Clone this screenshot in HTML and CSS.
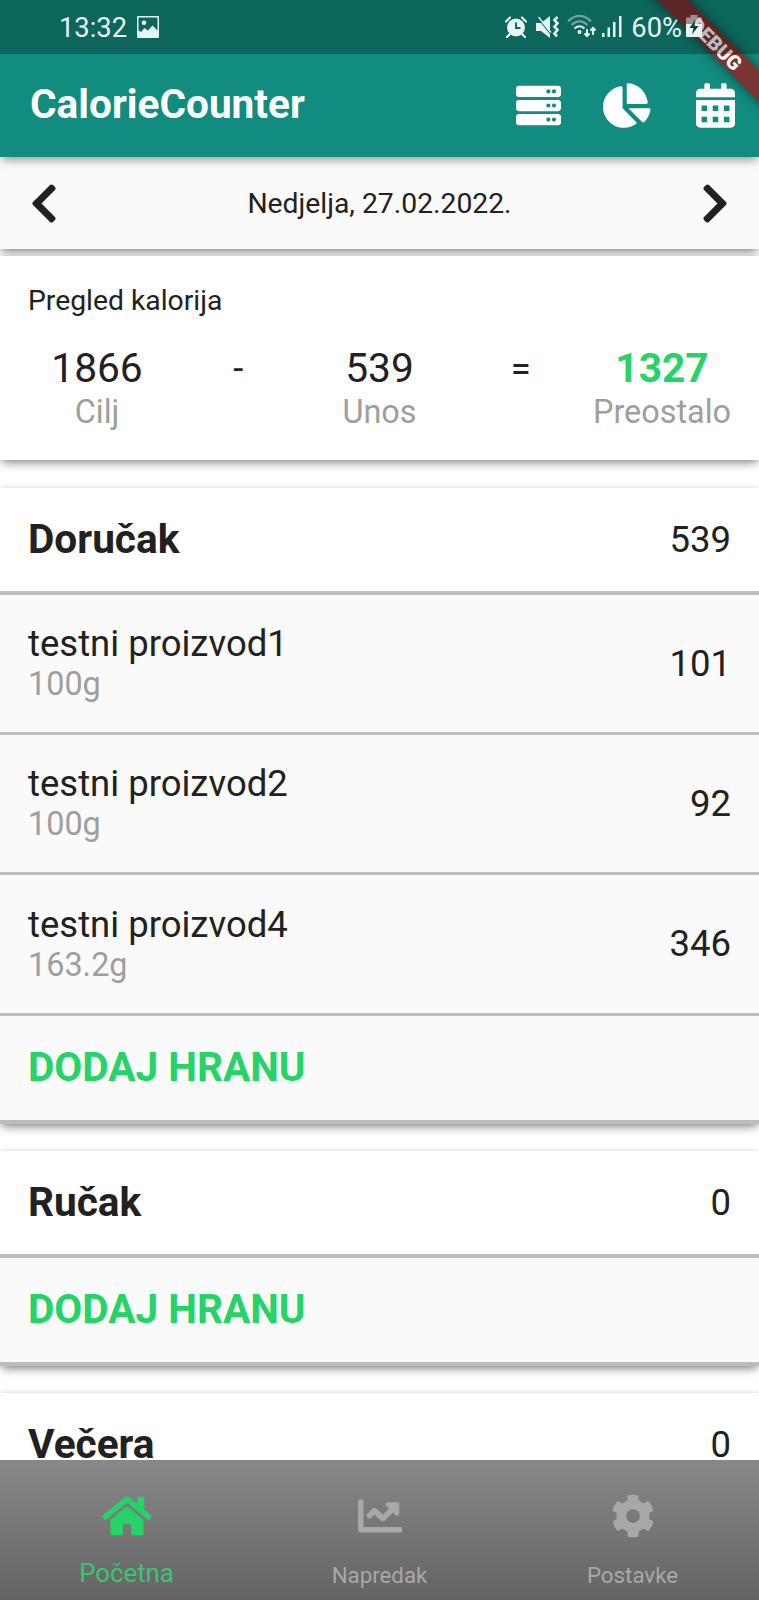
FILE: index.html
```html
<!DOCTYPE html>
<html lang="hr">
<head>
<meta charset="utf-8">
<title>CalorieCounter</title>
<link rel="stylesheet" href="styles.css">
</head>
<body>
<div class="screen">
  <header class="top">
    <div class="status">
      <span class="clock">13:32</span>
      <svg class="st-img" viewBox="0 0 22 22"><path fill="currentColor" fill-rule="evenodd" d="M1 0h20a1 1 0 0 1 1 1v20a1 1 0 0 1-1 1H1a1 1 0 0 1-1-1V1a1 1 0 0 1 1-1zM1.500 1.500v13l2.500 1.500 3.500-4 3.500 2.500 4.500-5 5 5V1.500zM7 4.500a2.300 2.300 0 1 1 0 4.600 2.300 2.300 0 0 1 0-4.600z"/></svg>
      <span class="grow"></span>
      <svg class="st-alarm" viewBox="0 0 22 22"><circle cx="11" cy="11.500" r="9" fill="currentColor"/><path d="M1 5.500 5 1.500M21 5.500 17 1.500M5 18l-3 3M17 18l3 3" stroke="currentColor" stroke-width="2.200" stroke-linecap="round"/><path d="M11 6.500V12h4.500" fill="none" stroke="#0e675b" stroke-width="1.900"/></svg>
      <svg class="st-mute" viewBox="0 0 23 22"><path fill="currentColor" d="M0 7h5l9-7v22l-9-7H0z"/><path d="M1 1l15 19" stroke="#0e675b" stroke-width="1.200"/><path d="M2.500 1 15 16.500" stroke="currentColor" stroke-width="1.300"/><path d="M21.500 1l-3 3 3 3.300-3 3.400 3 3.300-3 3.400 2.500 3" fill="none" stroke="currentColor" stroke-width="2.600"/></svg>
      <svg class="st-wifi" viewBox="0 0 29 23"><g fill="none" stroke="currentColor" stroke-width="2.200"><path d="M1 6.500C8-1 17-1 24 6.500M4.500 10c5-5 11-5 16 0" opacity=".45"/><path d="M7.500 13.500c3-3 7-3 10 0"/></g><circle cx="12.500" cy="17" r="2" fill="currentColor"/><path d="M20 14v7m-2.600-2.600L20 21l2.600-2.600M26 20v-7m-2.600 2.600L26 13l2.600 2.600" fill="none" stroke="currentColor" stroke-width="2"/></svg>
      <svg class="st-signal" viewBox="0 0 20 21"><path fill="currentColor" d="M0 17h2.500v4H0zM5.500 11.500H8V21H5.500zM11 6h2.500v15H11zM17 0h2.500v21H17z"/></svg>
      <span class="pct">60%</span>
      <svg class="st-batt" viewBox="0 0 16 23"><path fill="currentColor" opacity=".5" d="M4.500 0h7v2.500H16V10H0V2.500h4.500z"/><path fill="currentColor" d="M0 9h16v13H0z"/><path fill="#123c38" d="M9.500 4.500 3.500 13h4L6 19.500l6.500-8.500h-4z"/></svg>
    </div>
    <div class="appbar">
      <h1 class="brand">CalorieCounter</h1>
      <svg class="ico-server" viewBox="0 0 512 512"><path fill="currentColor" fill-rule="evenodd" d="M480 160H32c-17.700 0-32-14.300-32-32V64c0-17.700 14.300-32 32-32h448c17.700 0 32 14.300 32 32v64c0 17.700-14.300 32-32 32zm-48-88a24 24 0 1 0 0 48 24 24 0 0 0 0-48zm-64 0a24 24 0 1 0 0 48 24 24 0 0 0 0-48zM480 320H32c-17.700 0-32-14.300-32-32v-64c0-17.700 14.300-32 32-32h448c17.700 0 32 14.300 32 32v64c0 17.700-14.300 32-32 32zm-48-88a24 24 0 1 0 0 48 24 24 0 0 0 0-48zm-64 0a24 24 0 1 0 0 48 24 24 0 0 0 0-48zM480 480H32c-17.700 0-32-14.300-32-32v-64c0-17.700 14.300-32 32-32h448c17.700 0 32 14.300 32 32v64c0 17.700-14.300 32-32 32zm-48-88a24 24 0 1 0 0 48 24 24 0 0 0 0-48zm-64 0a24 24 0 1 0 0 48 24 24 0 0 0 0-48z"/></svg>
      <svg class="ico-pie" viewBox="0 0 544 512"><path fill="currentColor" d="M527.790 288H290.500l158.030 158.030c6.040 6.040 15.980 6.530 22.190.68 38.700-36.460 65.320-85.610 73.130-140.860 1.340-9.460-6.510-17.850-16.060-17.850zm-15.830-64.800C503.720 103.740 408.260 8.280 288.800.04 279.680-.59 272 7.100 272 16.240V240h223.770c9.140 0 16.820-7.680 16.190-16.800zM224 288V50.710c0-9.550-8.390-17.400-17.840-16.060C86.990 51.490-4.100 155.600.14 280.370 4.500 408.510 114.830 513.590 243.030 511.980c50.400-.63 96.970-16.870 135.260-44.030 7.900-5.600 8.420-17.230 1.570-24.080L224 288z"/></svg>
      <svg class="ico-cal" viewBox="0 0 448 512"><path fill="currentColor" fill-rule="evenodd" d="M0 464c0 26.500 21.500 48 48 48h352c26.500 0 48-21.500 48-48V192H0zM64 256h64v64H64zM192 256h64v64h-64zM320 256h64v64h-64zM64 384h64v64H64zM192 384h64v64h-64zM320 384h64v64h-64zM400 64h-48V16c0-8.800-7.200-16-16-16h-32c-8.800 0-16 7.200-16 16v48H160V16c0-8.800-7.200-16-16-16h-32c-8.800 0-16 7.200-16 16v48H48C21.500 64 0 85.500 0 112v48h448v-48c0-26.500-21.500-48-48-48z"/></svg>
    </div>
    <div class="ribbon">DEBUG</div>
  </header>

  <main class="content">
    <div class="datebar">
      <svg class="chev" viewBox="0 0 320 512"><path fill="currentColor" d="M34.520 239.030L228.870 44.690c9.370-9.370 24.570-9.370 33.940 0l22.670 22.670c9.360 9.360 9.370 24.520.04 33.900L131.490 256l154.020 154.750c9.340 9.380 9.320 24.540-.04 33.900l-22.670 22.670c-9.370 9.370-24.570 9.370-33.940 0L34.520 272.970c-9.370-9.370-9.370-24.570 0-33.940z"/></svg>
      <span class="date">Nedjelja, 27.02.2022.</span>
      <svg class="chev flip" viewBox="0 0 320 512"><path fill="currentColor" d="M34.520 239.030L228.870 44.690c9.370-9.370 24.570-9.370 33.940 0l22.670 22.670c9.360 9.360 9.370 24.520.04 33.900L131.490 256l154.020 154.750c9.340 9.380 9.320 24.540-.04 33.900l-22.670 22.670c-9.370 9.370-24.570 9.370-33.940 0L34.520 272.970c-9.370-9.370-9.370-24.570 0-33.940z"/></svg>
    </div>

    <section class="summary">
      <h2 class="summary-title">Pregled kalorija</h2>
      <div class="equation">
        <div class="term"><span class="value">1866</span><span class="label">Cilj</span></div>
        <span class="op">-</span>
        <div class="term"><span class="value">539</span><span class="label">Unos</span></div>
        <span class="op">=</span>
        <div class="term"><span class="value left">1327</span><span class="label">Preostalo</span></div>
      </div>
    </section>

    <section class="meal">
      <div class="meal-head"><h3 class="meal-name">Doručak</h3><span class="kcal">539</span></div>
      <div class="food"><div class="food-text"><span class="food-name">testni proizvod1</span><span class="food-qty">100g</span></div><span class="kcal">101</span></div>
      <div class="food"><div class="food-text"><span class="food-name">testni proizvod2</span><span class="food-qty">100g</span></div><span class="kcal">92</span></div>
      <div class="food last"><div class="food-text"><span class="food-name">testni proizvod4</span><span class="food-qty">163.2g</span></div><span class="kcal">346</span></div>
      <div class="add">DODAJ HRANU</div>
    </section>

    <section class="meal">
      <div class="meal-head"><h3 class="meal-name">Ručak</h3><span class="kcal">0</span></div>
      <div class="add">DODAJ HRANU</div>
    </section>

    <section class="meal">
      <div class="meal-head"><h3 class="meal-name">Večera</h3><span class="kcal">0</span></div>
    </section>
  </main>

  <nav class="tabs">
    <div class="tab active">
      <svg class="tab-home" viewBox="0 0 576 512"><path fill="currentColor" d="M280.370 148.260L96 300.110V464a16 16 0 0 0 16 16l112.060-.29a16 16 0 0 0 15.920-16V368a16 16 0 0 1 16-16h64a16 16 0 0 1 16 16v95.640a16 16 0 0 0 16 16.050L464 480a16 16 0 0 0 16-16V300L295.670 148.260a12.190 12.190 0 0 0-15.300 0zM571.600 251.470L488 182.560V44.050a12 12 0 0 0-12-12h-56a12 12 0 0 0-12 12v72.610L318.470 43a48 48 0 0 0-61 0L4.340 251.470a12 12 0 0 0-1.600 16.900l25.500 31A12 12 0 0 0 45.150 301l235.220-193.740a12.190 12.190 0 0 1 15.300 0L530.900 301a12 12 0 0 0 16.900-1.600l25.500-31a12 12 0 0 0-1.700-16.930z"/></svg>
      <span class="tab-label">Početna</span>
    </div>
    <div class="tab">
      <svg class="tab-ico" viewBox="0 0 512 512"><path fill="currentColor" d="M496 384H64V80c0-8.840-7.160-16-16-16H16C7.160 64 0 71.160 0 80v336c0 17.670 14.330 32 32 32h464c8.840 0 16-7.160 16-16v-32c0-8.840-7.160-16-16-16zM464 96H345.940c-21.380 0-32.090 25.850-16.970 40.970l32.400 32.400L288 242.750l-73.370-73.370c-12.500-12.500-32.760-12.500-45.250 0l-68.690 68.690c-6.250 6.250-6.250 16.380 0 22.630l22.620 22.620c6.250 6.250 16.380 6.250 22.630 0L192 237.250l73.370 73.370c12.500 12.500 32.760 12.500 45.250 0l96-96 32.400 32.400c15.120 15.120 40.970 4.410 40.970-16.970V112c.01-8.840-7.150-16-15.990-16z"/></svg>
      <span class="tab-label">Napredak</span>
    </div>
    <div class="tab">
      <svg class="tab-ico" viewBox="0 0 512 512"><path fill="currentColor" d="M487.400 315.700l-42.600-24.600c4.300-23.200 4.300-47 0-70.200l42.600-24.600c4.900-2.800 7.100-8.600 5.500-14-11.100-35.600-30-67.800-54.700-94.600-3.800-4.100-10-5.100-14.800-2.300L380.800 110c-17.900-15.400-38.500-27.300-60.800-35.100V25.800c0-5.600-3.900-10.500-9.400-11.700-36.700-8.200-74.300-7.800-109.200 0-5.500 1.200-9.400 6.100-9.400 11.700V75c-22.200 7.900-42.800 19.800-60.800 35.100L88.700 85.500c-4.900-2.800-11-1.900-14.800 2.300-24.700 26.700-43.600 58.900-54.700 94.600-1.700 5.400.6 11.200 5.500 14L67.300 221c-4.300 23.200-4.300 47 0 70.200l-42.600 24.600c-4.900 2.800-7.100 8.600-5.500 14 11.100 35.600 30 67.800 54.700 94.600 3.800 4.100 10 5.100 14.800 2.300l42.600-24.600c17.900 15.400 38.500 27.300 60.800 35.100v49.200c0 5.600 3.900 10.500 9.400 11.700 36.700 8.200 74.300 7.800 109.200 0 5.500-1.200 9.400-6.100 9.400-11.700v-49.200c22.200-7.900 42.800-19.800 60.800-35.100l42.600 24.600c4.900 2.800 11 1.900 14.800-2.300 24.700-26.700 43.600-58.900 54.700-94.600 1.500-5.500-.7-11.300-5.600-14.100zM256 336c-44.100 0-80-35.900-80-80s35.900-80 80-80 80 35.900 80 80-35.900 80-80 80z"/></svg>
      <span class="tab-label">Postavke</span>
    </div>
  </nav>
</div>
</body>
</html>
```
FILE: styles.css
```css
* { box-sizing: border-box; }
body {
  margin: 0;
  font-family: Roboto, "Liberation Sans", sans-serif;
  color: #212121;
}
h1, h2, h3 { margin: 0; font-weight: inherit; font-size: inherit; }
svg { display: block; flex: none; }

.screen {
  width: 759px;
  height: 1600px;
  display: flex;
  flex-direction: column;
  overflow: hidden;
  background: #fff;
}

/* status bar and app bar */
.top {
  position: relative;
  z-index: 2;
  flex: none;
  overflow: hidden;
  background: #128c7e;
  box-shadow: 0 5px 9px -2px rgba(0, 0, 0, 0.4);
  color: #fff;
}
.status {
  position: relative;
  z-index: 1;
  height: 54px;
  padding: 0 57px 1px 59px;
  display: flex;
  align-items: center;
  background: rgba(0, 0, 0, 0.265);
  color: #e6f5f2;
  font-size: 27.300px;
}
.clock, .pct { padding-top: 2px; }
.grow { flex: 1; }
.st-img { width: 22px; height: 22px; margin-left: 10px; }
.st-alarm { width: 22px; height: 22px; }
.st-mute { width: 23px; height: 22px; margin-left: 9px; }
.st-wifi { width: 29px; height: 23px; margin-left: 8px; }
.st-signal { width: 20px; height: 21px; margin-left: 6px; }
.pct { margin-left: 9px; }
.st-batt { width: 16px; height: 23px; margin-left: 4px; }
.appbar {
  height: 103px;
  padding: 0 24px 0 30px;
  display: flex;
  align-items: center;
}
.brand {
  flex: 1;
  padding-bottom: 3px;
  font-size: 40.600px;
  font-weight: 700;
}
.ico-server { width: 45px; height: 45px; margin-right: 42px; }
.ico-pie { width: 47.500px; height: 45px; margin-right: 45.500px; }
.ico-cal { width: 39px; height: 45px; }

.ribbon {
  position: absolute;
  left: 602px;
  top: 33px;
  width: 230px;
  height: 22px;
  line-height: 25px;
  padding-right: 1px;
  text-align: center;
  transform: rotate(45deg);
  background: rgba(165, 18, 22, 0.72);
  box-shadow: 0 0 12px rgba(0, 0, 0, 0.5);
  font-size: 20px;
  font-weight: 900;
}

/* scrolling content */
.content {
  flex: 1;
  min-height: 0;
  overflow: hidden;
}
.datebar {
  height: 92px;
  padding: 0 30px;
  display: flex;
  align-items: center;
  justify-content: space-between;
  background: #fafafa;
  box-shadow: 0 5px 9px -2px rgba(0, 0, 0, 0.4), 0 0 6px rgba(0, 0, 0, 0.2);
  font-size: 28.300px;
}
.chev { width: 28px; height: 45px; }
.flip { transform: scaleX(-1); }

.summary {
  position: relative;
  margin-top: 7px;
  height: 204px;
  padding: 27px 28px 0;
  background: #fff;
  box-shadow: 0 5px 9px -2px rgba(0, 0, 0, 0.42), 0 0 5px rgba(0, 0, 0, 0.15);
}
.summary-title { font-size: 28.300px; line-height: 35px; }
.equation {
  margin-top: 27px;
  display: grid;
  grid-template-columns: 138px 1fr 138px 1fr 138px;
}
.term { display: flex; flex-direction: column; align-items: center; }
.value { font-size: 40.700px; line-height: 47px; }
.left { color: #25d366; font-weight: 700; }
.label { font-size: 32.400px; line-height: 40px; color: #9e9e9e; }
.op { font-size: 36.500px; line-height: 48px; text-align: center; }

.meal {
  position: relative;
  margin-top: 28px;
  border-bottom: 4px solid #bdbdbd;
  background: #fafafa;
  box-shadow: 0 5px 9px -2px rgba(0, 0, 0, 0.42), 0 0 5px rgba(0, 0, 0, 0.15);
}
.meal + .meal { margin-top: 27px; }
.meal-head, .food {
  display: flex;
  align-items: center;
  justify-content: space-between;
  padding: 0 28px;
}
.meal-head {
  height: 107px;
  border-bottom: 4px solid #bdbdbd;
  background: #fff;
}
.meal-name { padding-bottom: 2px; font-size: 40.600px; font-weight: 700; }
.kcal { font-size: 36.500px; }
.food { height: 140px; padding-bottom: 1px; border-bottom: 3px solid #bdbdbd; }
.last { height: 141px; }
.food-text { display: flex; flex-direction: column; }
.food-name { font-size: 36.500px; line-height: 42px; }
.food-qty { font-size: 32.400px; line-height: 38px; color: #9e9e9e; }
.add {
  height: 104px;
  padding: 0 28px;
  line-height: 103px;
  font-size: 40.600px;
  font-weight: 700;
  color: #25d366;
}

/* bottom navigation */
.tabs {
  position: relative;
  flex: none;
  height: 140px;
  display: grid;
  grid-template-columns: repeat(3, 1fr);
  background: linear-gradient(#888, #646464);
}
.tab {
  display: flex;
  flex-direction: column;
  align-items: center;
  color: #a8a8a8;
  font-size: 22.300px;
}
.active { color: #25d366; }
.tab-ico { width: 44px; height: 44px; margin-top: 34px; }
.tab-home { width: 50px; height: 44px; margin-top: 34px; }
.tab-label { line-height: 30px; margin-top: 22px; }
.active .tab-label { margin-top: 20px; font-size: 25.800px; color: #3cc56d; }
```
